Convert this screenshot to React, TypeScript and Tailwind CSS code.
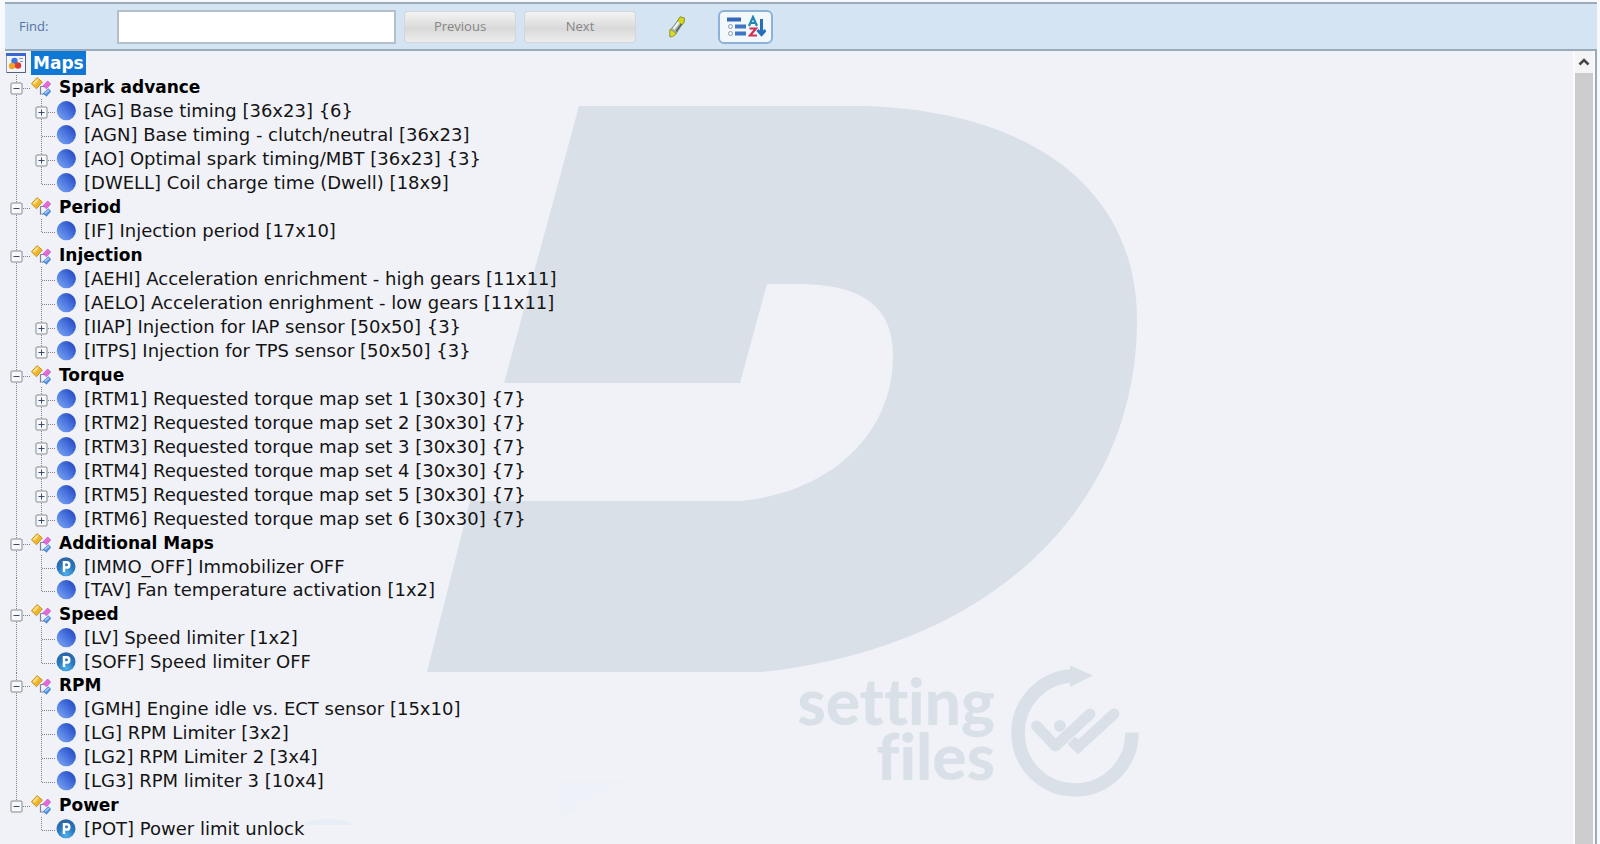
import { useState } from "react"

type Item = {
  label: string
  kind?: "patch"
  expandable?: boolean
}

type Group = {
  name: string
  items: Item[]
}

const groups: Group[] = [
  {
    name: "Spark advance",
    items: [
      { label: "[AG] Base timing [36x23] {6}", expandable: true },
      { label: "[AGN] Base timing - clutch/neutral [36x23]" },
      { label: "[AO] Optimal spark timing/MBT [36x23] {3}", expandable: true },
      { label: "[DWELL] Coil charge time (Dwell) [18x9]" },
    ],
  },
  {
    name: "Period",
    items: [{ label: "[IF] Injection period [17x10]" }],
  },
  {
    name: "Injection",
    items: [
      { label: "[AEHI] Acceleration enrichment - high gears [11x11]" },
      { label: "[AELO] Acceleration enrighment - low gears [11x11]" },
      { label: "[IIAP] Injection for IAP sensor [50x50] {3}", expandable: true },
      { label: "[ITPS] Injection for TPS sensor [50x50] {3}", expandable: true },
    ],
  },
  {
    name: "Torque",
    items: [
      { label: "[RTM1] Requested torque map set 1 [30x30] {7}", expandable: true },
      { label: "[RTM2] Requested torque map set 2 [30x30] {7}", expandable: true },
      { label: "[RTM3] Requested torque map set 3 [30x30] {7}", expandable: true },
      { label: "[RTM4] Requested torque map set 4 [30x30] {7}", expandable: true },
      { label: "[RTM5] Requested torque map set 5 [30x30] {7}", expandable: true },
      { label: "[RTM6] Requested torque map set 6 [30x30] {7}", expandable: true },
    ],
  },
  {
    name: "Additional Maps",
    items: [
      { label: "[IMMO_OFF] Immobilizer OFF", kind: "patch" },
      { label: "[TAV] Fan temperature activation [1x2]" },
    ],
  },
  {
    name: "Speed",
    items: [
      { label: "[LV] Speed limiter [1x2]" },
      { label: "[SOFF] Speed limiter OFF", kind: "patch" },
    ],
  },
  {
    name: "RPM",
    items: [
      { label: "[GMH] Engine idle vs. ECT sensor [15x10]" },
      { label: "[LG] RPM Limiter [3x2]" },
      { label: "[LG2] RPM Limiter 2 [3x4]" },
      { label: "[LG3] RPM limiter 3 [10x4]" },
    ],
  },
  {
    name: "Power",
    items: [{ label: "[POT] Power limit unlock", kind: "patch" }],
  },
]

type BranchProps = {
  down?: boolean
  arm?: boolean
  box?: "plus" | "minus"
}

// One gutter cell of the tree: dotted lines and the optional +/- box
function Branch({ down, arm, box }: BranchProps) {
  return (
    <svg className="block h-full w-[25px] shrink-0" fill="none" aria-hidden="true">
      {(down || arm) && (
        <line x1="10.5" y1="0" x2="10.5" y2={down ? 24 : 14} stroke="#7d8188" strokeDasharray="1 1" />
      )}
      {arm && <line x1="11" y1="13.5" x2="25" y2="13.5" stroke="#7d8188" strokeDasharray="1 1" />}
      {box && (
        <>
          <rect x="5" y="8" width="11" height="11" rx="1" fill="#f7f8fa" stroke="#85888e" />
          <path d={box === "plus" ? "M7.500 13.500h6M10.500 10.500v6" : "M7.500 13.500h6"} stroke="#3a4c70" />
        </>
      )}
    </svg>
  )
}

function RootIcon() {
  return (
    <svg className="block size-5 shrink-0" viewBox="0 0 20 20" aria-hidden="true">
      <rect x="0.500" y="0.500" width="19" height="19" fill="#f2f5fc" stroke="#8e97ab" />
      <rect x="0" y="0" width="20" height="3" fill="#3a68cf" />
      <path d="M1 19.500h18.500V3" fill="none" stroke="#56617a" />
      <circle cx="8.500" cy="8" r="3.200" fill="#3f78e0" />
      <circle cx="6" cy="13" r="3.200" fill="#f0a52a" />
      <circle cx="12" cy="12.500" r="3.200" fill="#dc3a30" />
      <path d="M13 5.500h4M14 8.500h3" stroke="#8a94ad" />
    </svg>
  )
}

function CategoryIcon() {
  return (
    <svg className="block size-5 shrink-0" viewBox="0 0 20 20" aria-hidden="true">
      <path d="M9.500 9.500v8M9.500 9.500h4M9.500 17h4.500" fill="none" stroke="#76839a" strokeWidth="1.200" />
      <path d="M.4 6.800 6 .6 11.400 5 5.500 11.800z" fill="#efb62b" stroke="#b98516" strokeWidth="0.800" />
      <path d="M1.500 6.300 6 1.500l2 1.600L3.500 8z" fill="#fbdc7c" />
      <path d="M12 8.700 16.700 4l3 3L15.500 11.800z" fill="#e66bd9" stroke="#b347ae" strokeWidth="0.600" />
      <path d="M12.500 16.300 17.500 11.800l2.300 2.500L15.500 19.200z" fill="#4f93e6" stroke="#2f66b8" strokeWidth="0.600" />
      <path d="m13.500 16 4-3.500 1 1-4 3.600z" fill="#a9d0fa" />
    </svg>
  )
}

function MapIcon() {
  return (
    <svg className="block size-5 shrink-0" viewBox="0 0 20 20" aria-hidden="true">
      <defs>
        <linearGradient id="ball" x1="0.100" y1="0.900" x2="0.850" y2="0.200">
          <stop offset="0" stopColor="#77a0ee" />
          <stop offset="0.550" stopColor="#4b76e0" />
          <stop offset="1" stopColor="#2b51c6" />
        </linearGradient>
      </defs>
      <circle cx="10.300" cy="9.700" r="9.600" fill="url(#ball)" />
    </svg>
  )
}

function PatchIcon() {
  return (
    <svg className="block size-5 shrink-0" viewBox="0 0 20 20" aria-hidden="true">
      <defs>
        <radialGradient id="patch" cx="0.500" cy="0.850" r="0.900">
          <stop offset="0" stopColor="#4fb0ea" />
          <stop offset="0.500" stopColor="#2a78c0" />
          <stop offset="1" stopColor="#2a5f9e" />
        </radialGradient>
      </defs>
      <circle cx="10" cy="9.700" r="9.500" fill="url(#patch)" />
      <path d="M8 15V5.200h2.600a2.700 2.700 0 0 1 0 5.400H8" fill="none" stroke="#fff" strokeWidth="2.500" />
    </svg>
  )
}

function PencilIcon() {
  return (
    <svg className="block h-6 w-5" viewBox="0 0 20 24" aria-hidden="true">
      <path d="M3 15.500 12.500 3.500l4.500 3L8.500 19.500 3 22z" fill="#a9b5a6" stroke="#6c7868" strokeWidth="0.800" />
      <path d="M10.500 6 13 1.800l4.500 1.200-.5 4.500-2 2.500z" fill="#d2d816" stroke="#77801a" strokeWidth="0.800" />
      <path d="M3 14 9 18.500 7 21l-4 1z" fill="#dfe01f" stroke="#8b9224" strokeWidth="0.800" />
      <path d="M6.500 14 12 7" stroke="#eef3ee" strokeWidth="2.200" />
      <path d="M9 16.500 14.500 9" stroke="#59645a" strokeWidth="1.300" />
    </svg>
  )
}

function SortIcon() {
  return (
    <svg className="block h-6 w-10" viewBox="0 0 40 24" fill="none" aria-hidden="true">
      <path d="M1 4.500h14" stroke="#3767b8" strokeWidth="4" />
      <path d="M9 11.500h11M9 18.500h11" stroke="#3f74c4" strokeWidth="4" />
      <circle cx="4.500" cy="11.500" r="2" stroke="#8c99ab" />
      <circle cx="4.500" cy="18.500" r="2" stroke="#8c99ab" />
      <path d="m23 11 4-9 4 9M24.500 8h5" stroke="#2187b4" strokeWidth="2.200" />
      <path d="M23.500 13.500H30l-6 7h7" stroke="#cf2f56" strokeWidth="2.200" />
      <path d="M35.500 4v15M31.500 15l4 4.500 4-4.500" stroke="#2470b8" strokeWidth="3" />
    </svg>
  )
}

function Watermark() {
  return (
    <div className="pointer-events-none absolute inset-0 overflow-hidden" aria-hidden="true">
      <svg className="absolute left-[427px] top-[55px] h-[566px] w-[710px]" viewBox="427 106 710 566">
        <path
          d="M579 106H866C1040 112 1137 195 1137 320C1137 508 990 648 762 672H427L470 501H741C830 492 893 435 893 355C893 305 860 284 797 284H767L740 383H504Z"
          fill="#dae0e8"
        />
      </svg>
      <div className="absolute left-[793px] top-[614px] flex items-start gap-4 text-[#dae0e8]">
        <div className="flex w-[202px] flex-col items-end pt-2 font-[Lato,sans-serif] text-[64px] leading-[55px] font-black [font-variant-ligatures:none]">
          <span>setting</span>
          <span>files</span>
        </div>
        <svg className="h-[134px] w-[130px]" viewBox="1011 665 130 134" fill="none">
          <path d="M1072 676A57 57 0 1 0 1132 732.500" stroke="currentColor" strokeWidth="13.500" />
          <path d="M1070 665.500 1093 675.500 1070 687z" fill="currentColor" />
          <circle cx="1060" cy="726" r="6" fill="currentColor" />
          <path d="M1073 742 1078 747 1114 714" stroke="currentColor" strokeWidth="11" strokeLinecap="round" />
          <path d="M1036.500 726 1055.500 746 1090 714" stroke="#f1f2f8" strokeWidth="13" />
          <path
            d="M1036.500 726 1055.500 746 1090 714"
            stroke="currentColor"
            strokeWidth="11"
            strokeLinecap="round"
            strokeLinejoin="round"
          />
        </svg>
      </div>
      <svg className="absolute left-[300px] top-[725px] h-[60px] w-[330px]" viewBox="0 0 330 60">
        <path d="M0 49C18 41 36 41 56 49z" fill="#e7eef6" />
        <path d="M258 5 330 3 258 44z" fill="#eff1f8" />
      </svg>
    </div>
  )
}

function Toolbar() {
  return (
    <header className="mt-0.5 mr-[3px] ml-[5px] flex h-[49px] items-center border-y-2 border-[#9aabba] bg-[#d5e4f2] pl-3.5 font-['Open_Sans',sans-serif] text-[13px]">
      <label htmlFor="find" className="w-[98px] text-[#5272a3]">
        Find:
      </label>
      <input
        id="find"
        type="text"
        className="h-[34px] w-[279px] border-2 border-[#b3bfca] bg-white px-2 text-sm text-black outline-none"
      />
      <div className="ml-2 flex gap-2">
        <button
          type="button"
          className="h-8 w-28 rounded-sm border border-[#d3d6da] bg-linear-to-b from-[#f4f4f4] via-[#d9d9d9] via-55% to-[#ededed] text-[#858585]"
        >
          Previous
        </button>
        <button
          type="button"
          className="h-8 w-28 rounded-sm border border-[#d3d6da] bg-linear-to-b from-[#f4f4f4] via-[#d9d9d9] via-55% to-[#ededed] text-[#858585]"
        >
          Next
        </button>
      </div>
      <div className="ml-[31px] flex items-center gap-[31px]">
        <button type="button" aria-label="Edit">
          <PencilIcon />
        </button>
        <button
          type="button"
          aria-label="Sort"
          className="flex h-[34px] w-[55px] items-center justify-center rounded-md border-2 border-[#8db2d8] bg-[#f3f8fd]"
        >
          <SortIcon />
        </button>
      </div>
    </header>
  )
}

function TreeItem({ item, last, lastGroup }: { item: Item; last: boolean; lastGroup: boolean }) {
  const patch = item.kind === "patch"
  const branch = <Branch down={!last} arm box={item.expandable ? "plus" : undefined} />

  return (
    <li className={patch ? "flex h-[23px] items-center" : "flex h-6 items-center"}>
      <Branch down={!lastGroup} />
      {item.expandable ? (
        <button type="button" aria-label="Expand" className="h-full">
          {branch}
        </button>
      ) : (
        branch
      )}
      {patch ? <PatchIcon /> : <MapIcon />}
      <span className="ml-2 text-lg leading-6 whitespace-nowrap">{item.label}</span>
    </li>
  )
}

function TreeGroup({ group, last }: { group: Group; last: boolean }) {
  const [open, setOpen] = useState(true)

  return (
    <li>
      <div className="flex h-6 items-center">
        <button type="button" aria-label="Toggle" className="h-full" onClick={() => setOpen(!open)}>
          <Branch down={!last} arm box={open ? "minus" : "plus"} />
        </button>
        <CategoryIcon />
        <span className="ml-2 font-bold whitespace-nowrap text-black">{group.name}</span>
      </div>
      {open && (
        <ul>
          {group.items.map((item, i) => (
            <TreeItem key={item.label} item={item} last={i === group.items.length - 1} lastGroup={last} />
          ))}
        </ul>
      )}
    </li>
  )
}

export default function App() {
  return (
    <div className="flex min-h-screen flex-col bg-[#f8f9fc]">
      <Toolbar />

      <main className="relative mr-[3px] flex flex-1 border-r-2 border-[#9aabba] bg-[#f1f2f8]">
        <Watermark />

        {/* Map tree */}
        <div className="relative flex-1 pl-1.5 font-['DejaVu_Sans',Verdana,sans-serif] text-[17px] leading-6 text-[#141414]">
          <div className="flex h-6 items-center gap-[5px]">
            <RootIcon />
            <span className="bg-[#0f78d4] px-0.5 font-bold text-white">Maps</span>
          </div>
          <ul>
            {groups.map((group, i) => (
              <TreeGroup key={group.name} group={group} last={i === groups.length - 1} />
            ))}
          </ul>
        </div>

        {/* Scrollbar */}
        <div className="relative flex w-[22px] flex-col border-x-2 border-[#fafbfd] bg-[#cdcccd]">
          <button
            type="button"
            aria-label="Scroll up"
            className="flex h-[22px] items-center justify-center bg-[#f4f4f5]"
          >
            <svg className="h-2 w-3" viewBox="0 0 12 8" fill="none">
              <path d="M1.500 6.500 6 2l4.500 4.500" stroke="#454545" strokeWidth="2.600" />
            </svg>
          </button>
        </div>
      </main>
    </div>
  )
}
